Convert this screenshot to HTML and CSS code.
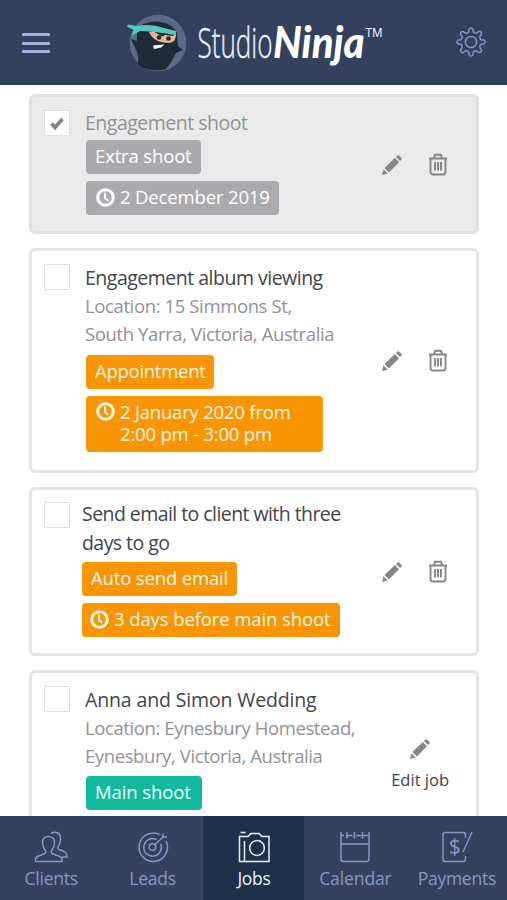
FILE: index.html
```html
<!DOCTYPE html>
<html lang="en">
<head>
<meta charset="utf-8">
<title>Studio Ninja - Jobs</title>
<link rel="stylesheet" href="styles.css">
</head>
<body>
<svg class="defs" width="0" height="0" aria-hidden="true">
  <symbol id="pencil" viewBox="0 0 20 20">
    <path d="M0 20 1.500 14.200 5.800 18.500ZM2.500 13.100 12.800 3 17 7.200 6.800 17.500ZM13.900 1.900 15.200.700Q16.200-.200 17.200.700L19.300 2.800Q20.300 3.800 19.300 4.800L18.100 6.100Z"/>
  </symbol>
  <symbol id="trash" viewBox="0 0 20 22">
    <path d="M1 5H19M6 5 7 1.200H13L14 5M2.500 5V18.500Q2.500 21 5 21H15Q17.500 21 17.500 18.500V5M7 8.500V17M10 8.500V17M13 8.500V17" fill="none" stroke="currentColor" stroke-width="1.900"/>
  </symbol>
  <symbol id="clock" viewBox="0 0 20 20">
    <circle cx="10" cy="10" r="8.200" fill="none" stroke="currentColor" stroke-width="3.200"/>
    <path d="M9.500 5V10.500L13 13.500" fill="none" stroke="currentColor" stroke-width="2.200"/>
  </symbol>
</svg>
<header class="topbar">
  <div class="burger"><i></i><i></i><i></i></div>
  <svg class="logo" viewBox="0 0 262 64" width="262" height="64">
    <circle cx="32" cy="34" r="28.300" fill="#5a6a84"/>
    <path d="M11 20Q16 13 29 12.500Q46 13 51 24L52 37 57 41 50 44Q46 53 40 60Q26 64 12 56Q13 49 11.500 44L5 30 11 32Z" fill="#1d2a38"/>
    <path d="M23 23Q35 21 50 26Q50 33 43 34Q28 34 23 23Z" fill="#f0b190"/>
    <path d="M27 22 36 27.500 39 26 48 27 45 21Z" fill="#1d2a38"/>
    <circle cx="33" cy="28.500" r="2.300" fill="#1d2a38"/><circle cx="42.500" cy="29.500" r="2.300" fill="#1d2a38"/>
    <path d="M27 36.500 38 35.500Q37 39 28 40Z" fill="#fff"/>
    <path d="M2 15.500 11 17Q25 14.500 38 19L50 22 50 26.500Q34 22.500 14 22L5 27 8 21 1 17.500Z" fill="#55c9be"/>
    <text class="logo-thin" x="71.500" y="48.500" textLength="75" lengthAdjust="spacingAndGlyphs">Studio</text>
    <text class="logo-bold" x="147" y="48.500" textLength="91.500" lengthAdjust="spacingAndGlyphs">Ninja</text>
    <text class="logo-tm" x="239.500" y="28" textLength="17" lengthAdjust="spacingAndGlyphs">TM</text>
  </svg>
  <svg class="gear" viewBox="0 0 30 30" width="30" height="30">
    <path d="M12.700 4.800 13 2.500Q13.200 1 15 1T17 2.500L17.300 4.800Q19 6.800 20.800 6L22.500 4.700Q23.800 3.900 24.900 5.100T25.300 7.500L24 9.200Q23.300 11.500 25.200 12.700L27.500 13Q29 13.200 29 15T27.500 17L25.200 17.300Q23.200 19 24 20.800L25.300 22.500Q26.100 23.800 24.900 24.900T22.500 25.300L20.800 24Q18.500 23.300 17.300 25.200L17 27.500Q16.800 29 15 29T13 27.500L12.700 25.200Q11 23.200 9.200 24L7.500 25.300Q6.200 26.100 5.100 24.900T4.700 22.500L6 20.800Q6.700 18.500 4.800 17.300L2.500 17Q1 16.800 1 15T2.500 13L4.800 12.700Q6.800 11 6 9.200L4.700 7.500Q3.900 6.200 5.100 5.100T7.500 4.700L9.200 6Q11.500 6.700 12.700 4.800Z"/>
    <circle cx="15" cy="15" r="5.600"/>
  </svg>
</header>
<main class="list">
  <article class="card done">
    <span class="check"><svg viewBox="0 0 14 13" width="14" height="13"><path d="M1.500 6.500 5 10.500 12.500 2" fill="none" stroke="#828282" stroke-width="3.600"/></svg></span>
    <div class="body">
      <h2>Engagement shoot</h2>
      <span class="tag">Extra shoot</span>
      <span class="tag timed"><svg class="clock"><use href="#clock"/></svg><span>2 December 2019</span></span>
    </div>
    <div class="actions"><svg class="pencil"><use href="#pencil"/></svg><svg class="trash"><use href="#trash"/></svg></div>
  </article>
  <article class="card viewing">
    <span class="check"></span>
    <div class="body">
      <h2>Engagement album viewing</h2>
      <p>Location: 15 Simmons St,<br>South Yarra, Victoria, Australia</p>
      <span class="tag appointment">Appointment</span>
      <span class="tag timed period"><svg class="clock"><use href="#clock"/></svg><span>2 January 2020 from<br>2:00 pm - 3:00 pm</span></span>
    </div>
    <div class="actions"><svg class="pencil"><use href="#pencil"/></svg><svg class="trash"><use href="#trash"/></svg></div>
  </article>
  <article class="card email">
    <span class="check"></span>
    <div class="body">
      <h2>Send email to client with three<br>days to go</h2>
      <span class="tag auto">Auto send email</span>
      <span class="tag timed before"><svg class="clock"><use href="#clock"/></svg><span>3 days before main shoot</span></span>
    </div>
    <div class="actions"><svg class="pencil"><use href="#pencil"/></svg><svg class="trash"><use href="#trash"/></svg></div>
  </article>
  <article class="card wedding">
    <span class="check"></span>
    <div class="body">
      <h2>Anna and Simon Wedding</h2>
      <p>Location: Eynesbury Homestead,<br>Eynesbury, Victoria, Australia</p>
      <span class="tag main-shoot">Main shoot</span>
    </div>
    <div class="edit"><svg class="pencil"><use href="#pencil"/></svg><span>Edit job</span></div>
  </article>
</main>
<nav class="tabs">
  <a class="tab clients"><svg viewBox="0 0 34 32"><path d="M1.500 30.500V28Q2 25.500 6 24.500L11 22.500Q12.500 21.500 11 19Q8.500 15.500 8.500 11.500Q8.500 5.500 14.500 5.500T20.500 11.500Q20.500 15.500 18 19Q16.500 21.500 18 22.500L23 24.500Q27.500 25.500 28 28V30.500ZM17 2.500Q19 1.200 21 1.200Q26.500 1.200 26.500 8Q26.500 12 24.500 15Q23 17.500 25 18.500L29 20Q33 21.500 33 26H28"/></svg><span>Clients</span></a>
  <a class="tab leads"><svg viewBox="0 0 34 32"><path d="M23.500 3.500A14.200 14.200 0 1 0 30 10M20.500 8.500A8.800 8.800 0 1 0 24.500 12.500M18.500 14 27 6V2.500M27 6H31"/><circle cx="16.500" cy="16" r="3.300"/></svg><span>Leads</span></a>
  <a class="tab active jobs"><svg viewBox="0 0 34 32"><path d="M2.500 5.500H11L14 2.500H22L25 5.500H32V30.500H2.500ZM3.500 1.500H8.500M7.500 10V30"/><circle cx="20" cy="17" r="7.400"/></svg><span>Jobs</span></a>
  <a class="tab calendar"><svg viewBox="0 0 34 32"><path d="M3 1V28Q3 30.500 5.500 30.500H28.500Q31 30.500 31 28V1M3 4.500H6M8 4.500H14.500M18.500 4.500H23.500M25.500 4.500H31M9 1V7.500M16.500 1V7.500M24.500 1V7.500M3 13H31"/></svg><span>Calendar</span></a>
  <a class="tab payments"><svg viewBox="0 0 34 32"><path d="M25.500 7V4Q25.500 1.500 23 1.500H5.500Q3 1.500 3 4V28Q3 30.500 5.500 30.500H23Q25.500 30.500 25.500 28V25M32 1 23 21"/><text x="8.800" y="23" class="dollar">$</text></svg><span>Payments</span></a>
</nav>
</body>
</html>
```
FILE: styles.css
```css
* { box-sizing: border-box; }
html, body { height: 100%; margin: 0; }
body {
  display: flex;
  flex-direction: column;
  overflow: hidden;
  background: #fff;
  color: #444448;
  font-family: "Open Sans", "Noto Sans", sans-serif;
}
.defs { position: absolute; }
.topbar {
  flex: none;
  height: 85px;
  display: flex;
  align-items: flex-start;
  background: #33415c;
  border-bottom: 1px solid #2c3650;
}
.burger { display: flex; flex-direction: column; gap: 5.700px; margin: 33px 0 0 22px; width: 28px; }
.burger i { height: 3px; border-radius: 1px; background: #9fb2e0; }
.logo { margin: 9px 0 0 76px; overflow: visible; }
.logo-thin { font: 300 43px "Open Sans", sans-serif; fill: #e9f2ff; stroke: #e9f2ff; stroke-width: 0.400; }
.logo-bold { font: italic 900 43px Lato, sans-serif; fill: #fff; }
.logo-tm { font: 400 13.500px "Open Sans", sans-serif; fill: #fff; }
.gear { margin: 27px 0 0 68px; fill: none; stroke: #8197c5; stroke-width: 1.500; stroke-linejoin: round; }
.list { flex: 1; min-height: 0; overflow: hidden; padding: 9px 28px 0 29px; display: flex; flex-direction: column; }
.card {
  flex: none;
  display: flex;
  align-items: flex-start;
  height: 140px;
  border: 3px solid #e5e5e6;
  border-radius: 6px;
  background: #fff;
}
.done { background: #eaeaea; border-color: #e0e0e0; }
.viewing { height: 225px; margin-top: 14px; }
.email { height: 169px; margin-top: 14px; }
.wedding { height: 190px; margin-top: 14px; }
.check {
  flex: none;
  width: 26px;
  height: 26px;
  margin: 13px 0 0 12px;
  display: flex;
  align-items: center;
  justify-content: center;
  background: #fff;
  border: 1.500px solid #dedede;
}
.email .check { margin-top: 12px; }
.body { flex: 1; margin: 12px 0 0 15px; display: flex; flex-direction: column; align-items: flex-start; }
.done .body { margin-top: 11px; }
.email .body { margin-left: 12px; margin-top: 9px; }
h2 { margin: 0; font-size: 19.500px; font-weight: 400; line-height: 29px; letter-spacing: -0.500px; white-space: nowrap; }
.done h2 { margin-bottom: 3px; color: #929294; }
.email h2 { letter-spacing: -0.560px; line-height: 29px; }
.wedding h2 { letter-spacing: -0.140px; }
p { margin: 0; font-size: 18.500px; line-height: 28px; letter-spacing: -0.400px; color: #929296; white-space: nowrap; }
.viewing p { letter-spacing: -0.380px; }
.tag {
  height: 34px;
  margin: 0 0 7px 1px;
  padding: 0 9px;
  border-radius: 4px;
  background: #f99503;
  color: #fff8e8;
  font-size: 18.500px;
  letter-spacing: -0.150px;
  line-height: 32px;
  white-space: nowrap;
}
.email .tag { margin-left: 0; }
.viewing .tag.appointment { margin-top: 7px; letter-spacing: -0.270px; width: 128px; }
.main-shoot { margin-top: 6px; width: 116px; }
.email .auto { margin-top: 5px; }
.done .tag { background: #aaaaae; color: #fff; }
.done .timed { margin-top: -0.500px; }
.wedding .main-shoot { background: #11b99d; color: #f0fffb; letter-spacing: -0.100px; }
.timed { display: flex; gap: 5px; padding-left: 10px; }
.clock { width: 19px; height: 19px; margin-top: 7px; }
.before { padding-left: 8px; letter-spacing: -0.100px; }
.period { width: 237px; height: 56px; line-height: 22.500px; padding-top: 4.500px; letter-spacing: -0.200px; }
.period .clock { margin-top: 1px; }
.actions { flex: none; display: flex; gap: 26px; align-items: center; margin-right: 28px; margin-top: 56px; color: #868686; }
.viewing .actions { margin-top: 98px; }
.email .actions { margin-top: 70px; }
.pencil { width: 20px; height: 20px; fill: #868686; }
.trash { width: 20px; height: 23px; }
.edit { flex: none; display: flex; flex-direction: column; align-items: center; margin: 66px 27px 0 0; font-size: 16.500px; }
.edit span { line-height: 24px; margin-top: 9px; }
.tabs { flex: none; display: flex; height: 84px; background: #35425e; }
.tab {
  flex: 1 1 0;
  display: flex;
  flex-direction: column;
  align-items: center;
  padding: 15px 0 0 1px;
  color: #8498c4;
  font-size: 17.500px;
  letter-spacing: -0.250px;
  line-height: 24px;
}
.tab svg { width: 34px; height: 32px; overflow: visible; fill: none; stroke: currentColor; stroke-width: 1.500; }
.tab span { margin-top: 3px; }
.calendar { letter-spacing: -0.100px; }
.tab .dollar { font: 21px "Open Sans", sans-serif; fill: currentColor; stroke: none; }
.active { background: #1d314a; color: #e8f3fb; }
```
